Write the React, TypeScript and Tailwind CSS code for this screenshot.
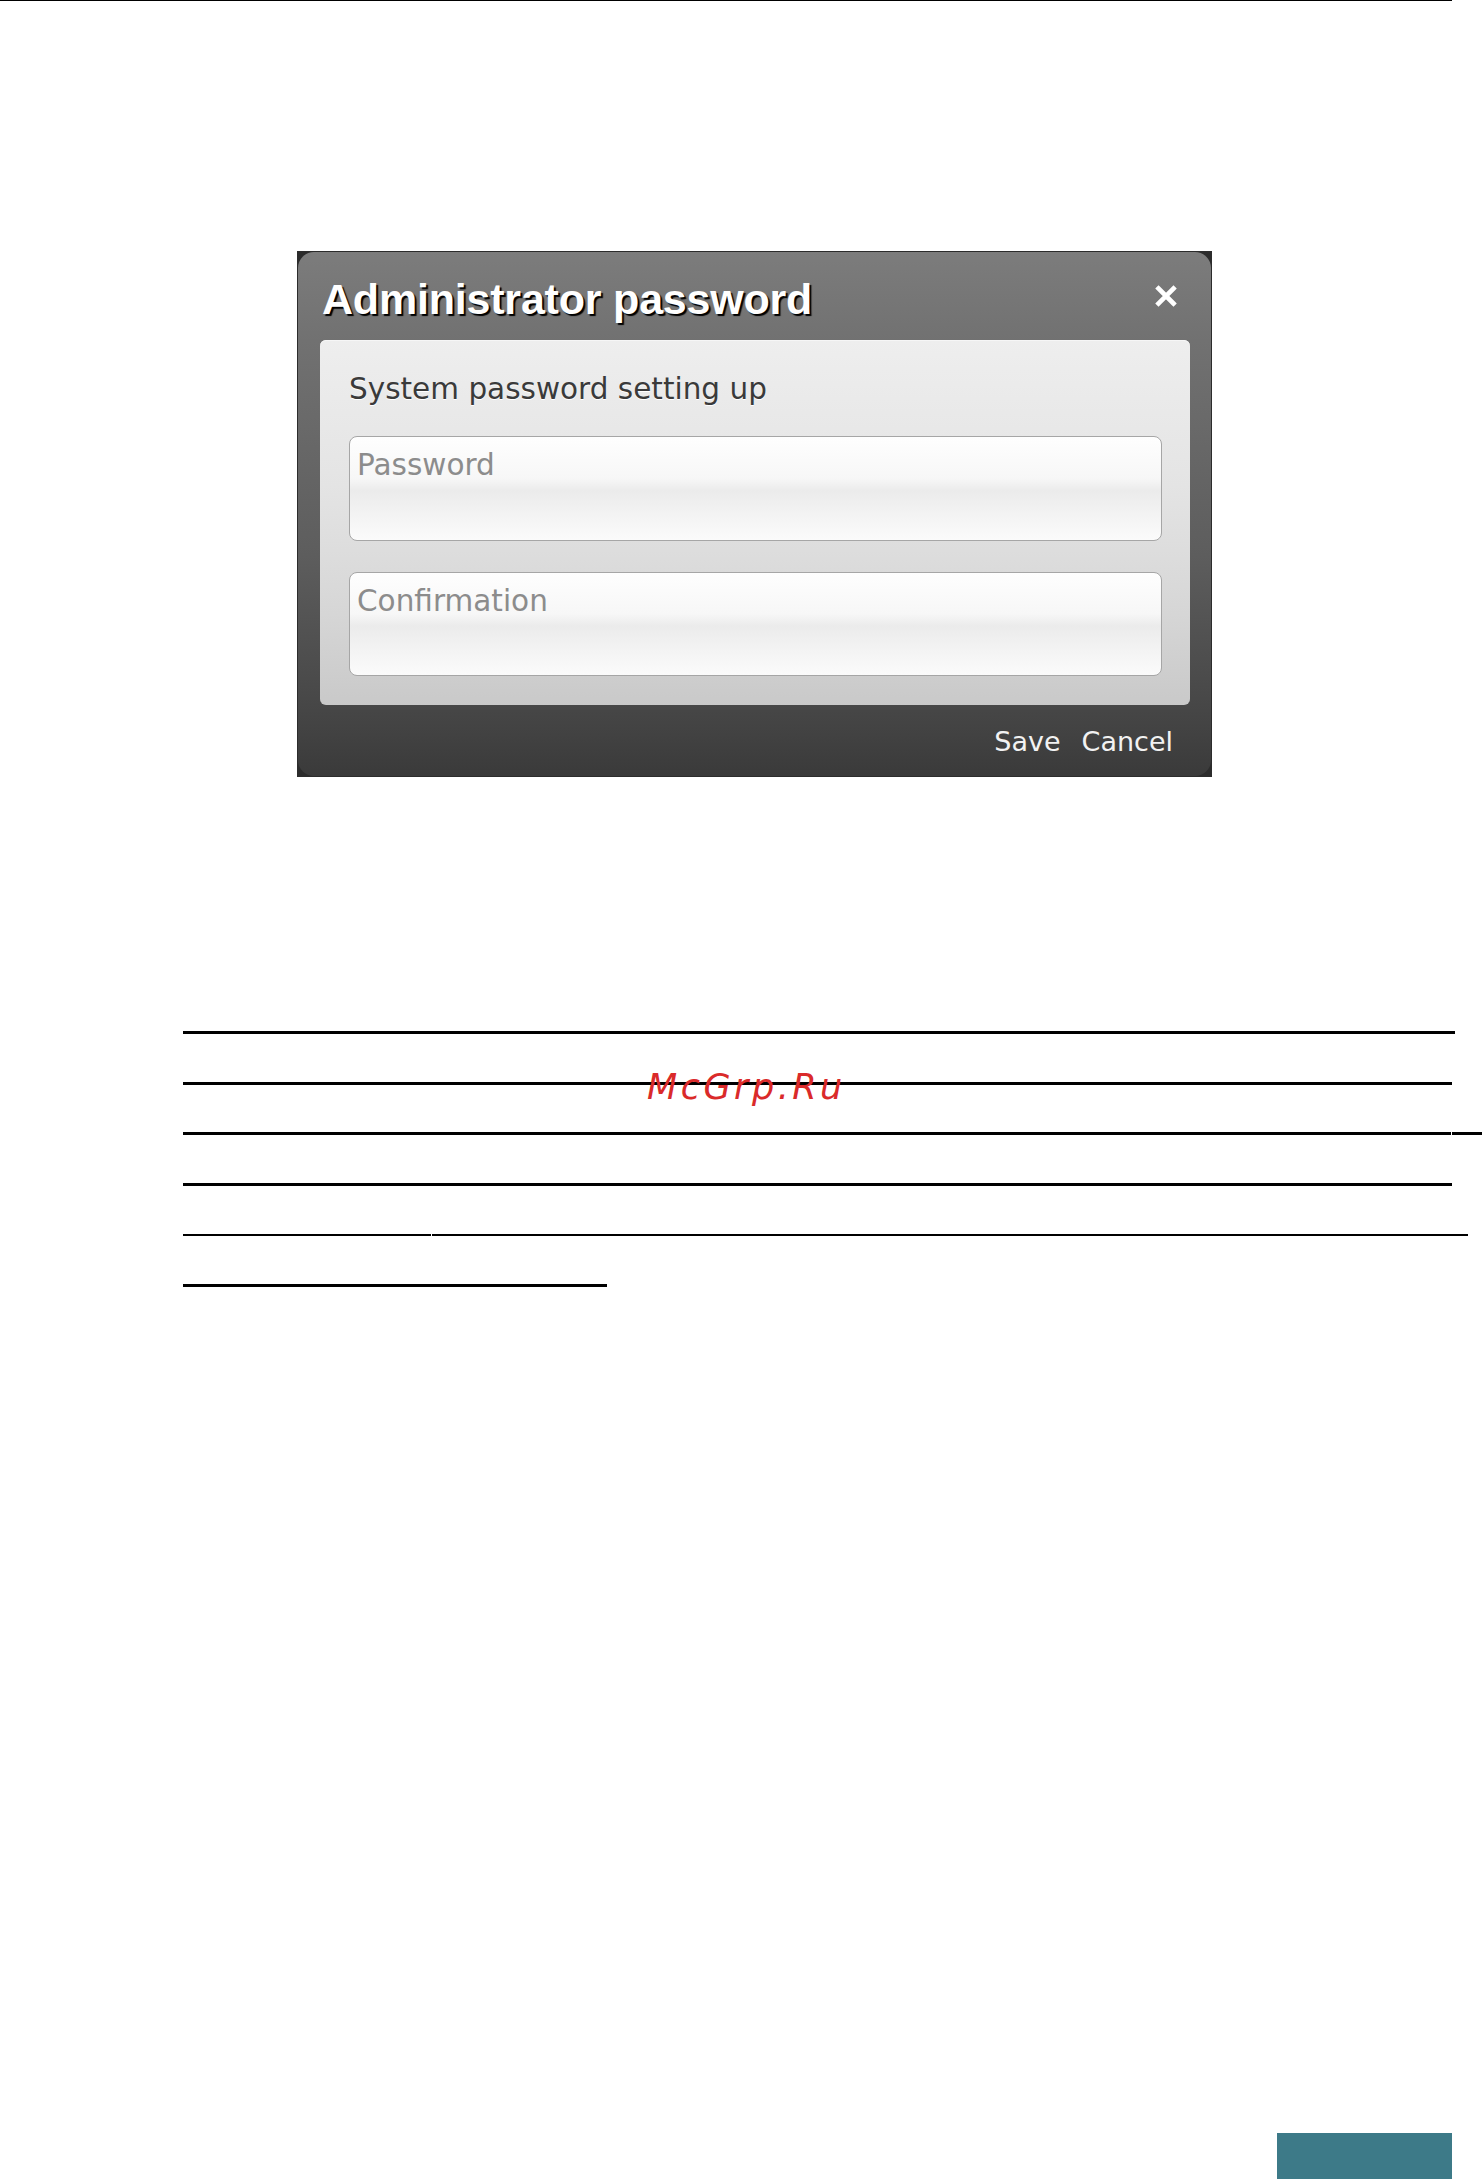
import React from "react";

export default function App() {
  return (
    <div className="relative flex h-[2179px] w-[1482px] flex-col bg-white font-['DejaVu_Sans',sans-serif]">
      {/* top rule */}
      <div className="h-px w-[1452px] bg-black" />

      {/* dialog screenshot */}
      <div className="ml-[297px] mt-[250px] h-[526px] w-[915px] bg-[#2c2c2c] p-px">
        <div className="flex h-full flex-col rounded-[16px] bg-[linear-gradient(180deg,#7c7c7c_0%,#717171_17%,#5d5d5d_58%,#494949_84%,#424242_92%,#3a3a3a_100%)]">
          {/* header */}
          <div className="flex h-[88px] items-start justify-between pl-[24px] pr-[34px] pt-[26px]">
            <span className="font-['Liberation_Sans',Arial,sans-serif] text-[43px] font-bold leading-none tracking-[-0.2px] text-white [text-shadow:2px_2px_1px_#000]">
              Administrator password
            </span>
            <svg width="22" height="22" viewBox="0 0 22 22" className="mt-[7px]">
              <path d="M3.5 3.5 L18.5 18.5 M18.5 3.5 L3.5 18.5" stroke="#ffffff" strokeWidth="4.6" strokeLinecap="square" fill="none" />
            </svg>
          </div>

          {/* light panel */}
          <div className="ml-[22px] mr-[21px] flex h-[365px] flex-col rounded-[6px] bg-[linear-gradient(180deg,#eeeeee_0%,#e4e4e4_40%,#d6d6d6_75%,#c9c9c9_100%)] pb-[29px] pl-[29px] pr-[28px] pt-[34px] shadow-[inset_0_1px_0_#f6f6f6]">
            <div className="h-[30px] text-[29.5px] leading-[30px] text-[#3a3a3a] [text-shadow:0_1px_0_#ffffff]">
              System password setting up
            </div>
            <div className="mt-[32px] h-[105px] rounded-[8px] border border-[#a6a6a6] bg-[linear-gradient(180deg,#fefefe_0%,#f7f7f7_40%,#ebebeb_52%,#f3f3f3_75%,#fbfbfb_100%)] pl-[7px] pt-[13px]">
              <div className="h-[30px] text-[29.5px] leading-[30px] text-[#8c8c8c]">Password</div>
            </div>
            <div className="mt-[31px] h-[104px] rounded-[8px] border border-[#a6a6a6] bg-[linear-gradient(180deg,#fefefe_0%,#f7f7f7_40%,#ebebeb_52%,#f3f3f3_75%,#fbfbfb_100%)] pl-[7px] pt-[13px]">
              <div className="h-[30px] text-[29.5px] leading-[30px] text-[#8c8c8c]">Confirmation</div>
            </div>
          </div>

          {/* footer */}
          <div className="flex flex-1 justify-end gap-[21px] pr-[38px] pt-[23px] text-[27px] leading-none text-[#f2f2f2]">
            <span>Save</span>
            <span>Cancel</span>
          </div>
        </div>
      </div>

      {/* lines */}
      <div className="relative ml-[183px] mt-[254px] flex flex-col">
        <div className="h-[3px] w-[1272px] bg-black" />
        <div className="mt-[48px] h-[3px] w-[1269px] bg-black" />
        <div className="mt-[47px] flex h-[3px] gap-px">
          <div className="w-[1268px] bg-black" />
          <div className="w-[30px] bg-black" />
        </div>
        <div className="mt-[48px] h-[3px] w-[1269px] bg-black" />
        <div className="mt-[48px] flex h-[2px] gap-px">
          <div className="w-[248px] bg-black" />
          <div className="w-[1036px] bg-black" />
        </div>
        <div className="mt-[48px] h-[3px] w-[424px] bg-black" />

        <div className="absolute left-[464px] top-[39px] font-['DejaVu_Sans',sans-serif] text-[35px] italic leading-none tracking-[3.5px] text-[#da2a2a]">
          McGrp.Ru
        </div>
      </div>

      {/* teal block */}
      <div className="ml-[1277px] mt-auto h-[46px] w-[175px] bg-[#3d7a88]" />
    </div>
  );
}
